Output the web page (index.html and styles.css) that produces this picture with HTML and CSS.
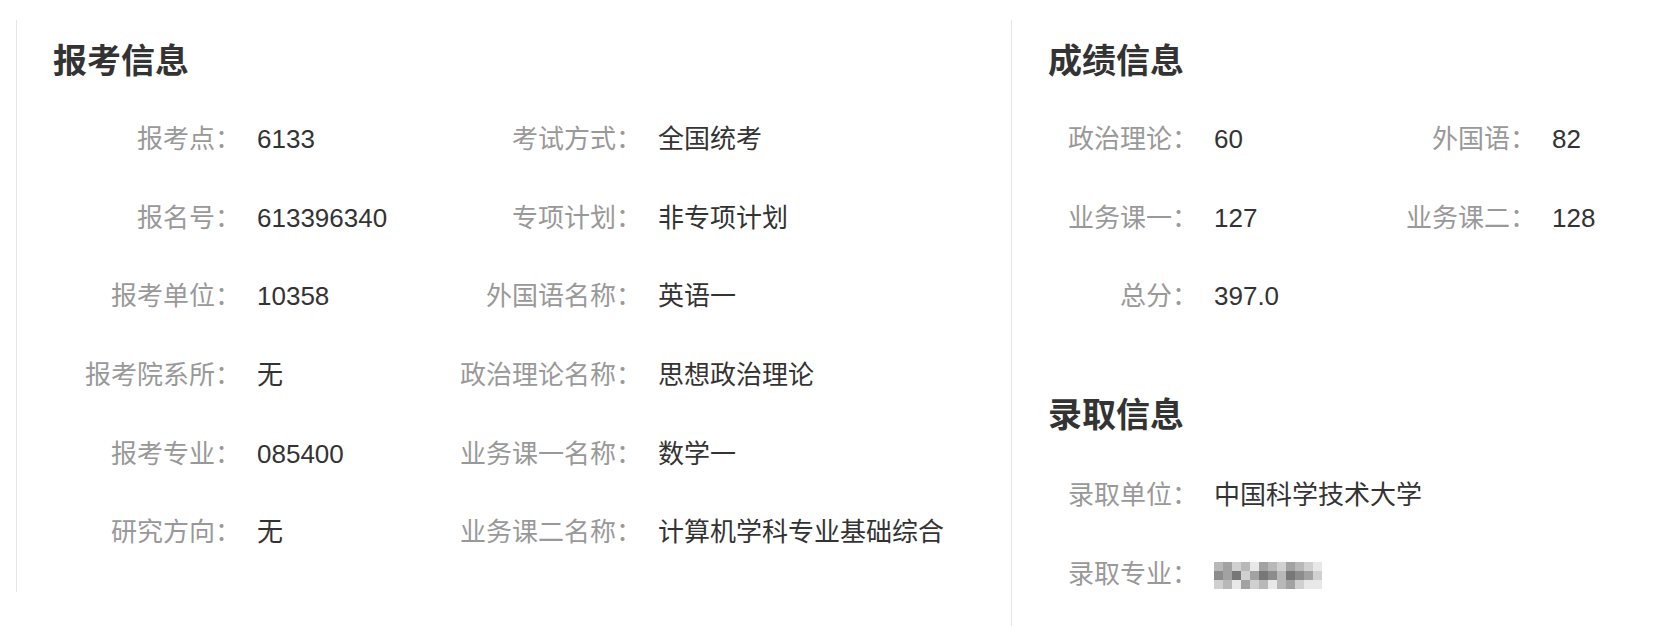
FILE: index.html
```html
<!DOCTYPE html>
<html lang="zh-CN">
<head>
<meta charset="utf-8">
<title>考生信息</title>
<link rel="stylesheet" href="styles.css">
</head>
<body>
<div class="page">
  <section class="panel panel-apply">
    <h2 class="title">报考信息</h2>
    <div class="grid grid-apply">
      <div class="label">报考点：</div><div class="value">6133</div>
      <div class="label">考试方式：</div><div class="value">全国统考</div>
      <div class="label">报名号：</div><div class="value">613396340</div>
      <div class="label">专项计划：</div><div class="value">非专项计划</div>
      <div class="label">报考单位：</div><div class="value">10358</div>
      <div class="label">外国语名称：</div><div class="value">英语一</div>
      <div class="label">报考院系所：</div><div class="value">无</div>
      <div class="label">政治理论名称：</div><div class="value">思想政治理论</div>
      <div class="label">报考专业：</div><div class="value">085400</div>
      <div class="label">业务课一名称：</div><div class="value">数学一</div>
      <div class="label">研究方向：</div><div class="value">无</div>
      <div class="label">业务课二名称：</div><div class="value">计算机学科专业基础综合</div>
    </div>
  </section>
  <section class="panel panel-score">
    <h2 class="title">成绩信息</h2>
    <div class="grid grid-score">
      <div class="label">政治理论：</div><div class="value">60</div>
      <div class="label">外国语：</div><div class="value">82</div>
      <div class="label">业务课一：</div><div class="value">127</div>
      <div class="label">业务课二：</div><div class="value">128</div>
      <div class="label">总分：</div><div class="value">397.0</div>
    </div>
    <h2 class="title title-next">录取信息</h2>
    <div class="grid grid-admit">
      <div class="label">录取单位：</div><div class="value">中国科学技术大学</div>
      <div class="label">录取专业：</div>
      <div class="value">
        <span class="blur" aria-label="已隐藏">
          <i class="s3"></i><i class="s4"></i><i class="s2"></i><i class="s3"></i><i class="s1"></i><i class="s4"></i><i class="s3"></i><i class="s2"></i><i class="s4"></i><i class="s3"></i><i class="s2"></i><i class="s1"></i>
          <i class="s5"></i><i class="s4"></i><i class="s6"></i><i class="s2"></i><i class="s4"></i><i class="s6"></i><i class="s5"></i><i class="s3"></i><i class="s6"></i><i class="s5"></i><i class="s4"></i><i class="s2"></i>
          <i class="s2"></i><i class="s3"></i><i class="s1"></i><i class="s4"></i><i class="s2"></i><i class="s3"></i><i class="s1"></i><i class="s3"></i><i class="s4"></i><i class="s2"></i><i class="s1"></i><i class="s1"></i>
        </span>
      </div>
    </div>
  </section>
</div>
</body>
</html>
```

FILE: styles.css
```css
html, body {
  margin: 0;
  padding: 0;
  background: #ffffff;
  overflow: hidden;
}

body {
  font-family: "Liberation Sans", "Noto Sans CJK SC", sans-serif;
  color: #333333;
}

.page {
  display: flex;
  height: 100vh;
  box-sizing: border-box;
  padding: 20px 0 0 16px;
}

.panel {
  border-left: 1px solid #e6e6e6;
  padding: 20px 0 20px 36px;
}

.panel-apply {
  width: 958px;
  align-self: flex-start;
}

.panel-score {
  flex: 1;
  align-self: stretch;
  padding-bottom: 0;
}

.title {
  margin: 0 0 18px;
  font-size: 34px;
  line-height: 42px;
  font-weight: 700;
  color: #333333;
}

.title-next {
  margin-top: 58px;
  margin-bottom: 20px;
}

.grid {
  display: grid;
  grid-auto-rows: 78.6px;
  align-items: center;
  font-size: 26px;
  line-height: 36px;
}

.grid-apply {
  grid-template-columns: 188px 213px 188px 1fr;
}

.grid-score {
  grid-template-columns: 150px 188px 150px 1fr;
}

.grid-admit {
  grid-template-columns: 150px 1fr;
}

.label {
  text-align: right;
  color: #999999;
  white-space: nowrap;
}

.value {
  padding-left: 16px;
  color: #333333;
  white-space: nowrap;
}

.blur {
  display: inline-grid;
  grid-template-columns: repeat(12, 9px);
  grid-auto-rows: 9px;
  vertical-align: middle;
}

.blur i {
  display: block;
}

.s1 { background: #e8e8e8; }
.s2 { background: #d0d0d0; }
.s3 { background: #b8b8b8; }
.s4 { background: #a2a2a2; }
.s5 { background: #8c8c8c; }
.s6 { background: #777777; }
```
